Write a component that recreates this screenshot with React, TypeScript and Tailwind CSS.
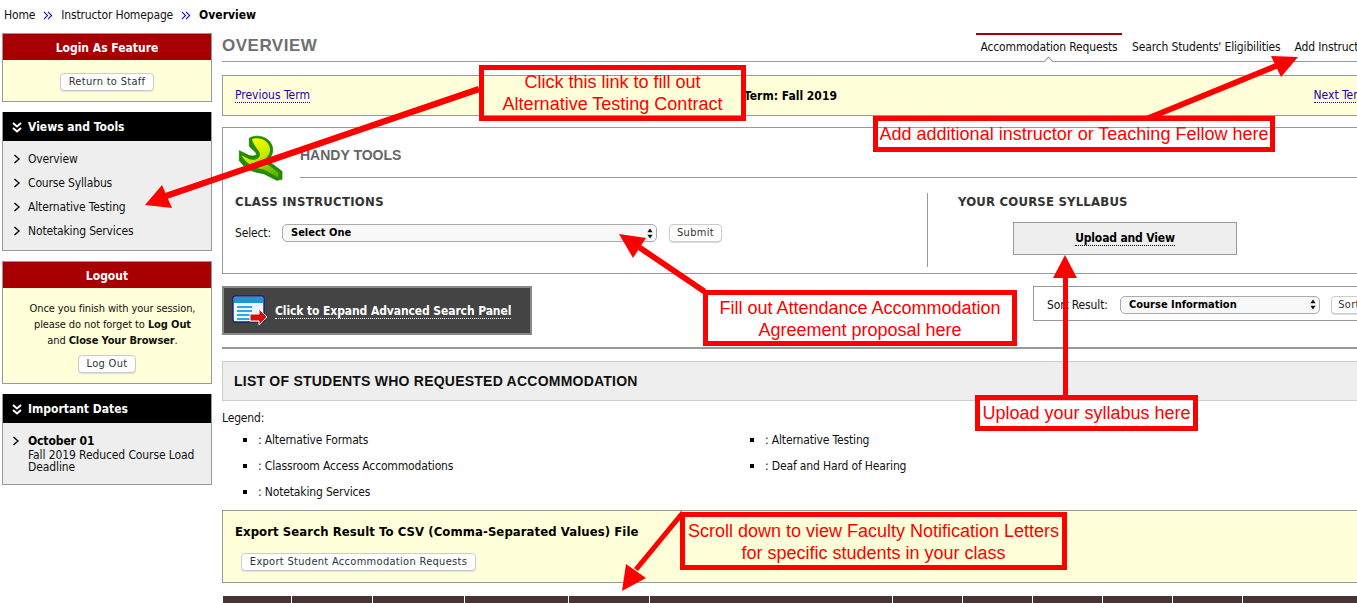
import React from "react";

const Chevron = () => (
  <svg width="8" height="10" viewBox="0 0 8 10" className="shrink-0">
    <path d="M1.5 1 L6 5 L1.5 9" fill="none" stroke="#000" strokeWidth="1.4" />
  </svg>
);

const DoubleDown = () => (
  <svg width="10" height="11" viewBox="0 0 10 11" className="shrink-0">
    <path d="M1 1 L5 4.5 L9 1 M1 6 L5 9.5 L9 6" fill="none" stroke="#fff" strokeWidth="2" />
  </svg>
);

const DoubleRight = () => (
  <svg width="10" height="9" viewBox="0 0 11 9">
    <path d="M1 .5 L5 4.5 L1 8.5 M5.5 .5 L9.5 4.5 L5.5 8.5" fill="none" stroke="#2a00d8" strokeWidth="1.2" />
  </svg>
);

const Btn = ({ children, className = "" }: { children: React.ReactNode; className?: string }) => (
  <span className={`inline-flex items-center justify-center shrink-0 h-[18px] rounded-[4px] border border-[#ccc] bg-white text-[11px] tracking-[0.3px] text-[#333] shadow-[0_1px_1px_#ddd] ${className}`}>
    {children}
  </span>
);

const Sel = ({ label, className }: { label: string; className: string }) => (
  <span className={`flex items-center justify-between shrink-0 h-[18px] rounded-[5px] border border-[#aaa] bg-[#f8f8f8] pl-2 pr-[3px] text-[11px] tracking-normal font-bold text-black ${className}`}>
    {label}
    <svg width="6" height="11" viewBox="0 0 6 11">
      <path d="M3 .5 L5.6 4.2 H.4Z M3 10.5 L5.6 6.8 H.4Z" fill="#111" />
    </svg>
  </span>
);

const Wrench = () => (
  <svg width="56" height="54" viewBox="0 0 168 162" className="shrink-0">
    <defs>
      <linearGradient id="wg" x1="0.25" y1="0" x2="0.75" y2="1">
        <stop offset="0" stopColor="#ffff00" />
        <stop offset="0.5" stopColor="#c4e800" />
        <stop offset="1" stopColor="#5cb000" />
      </linearGradient>
    </defs>
    <path
      d="M52 25 C65 16 90 15 108 30 C124 44 128 66 112 86 L118 100 L150 124 L150 148 L134 151 L95 131 C78 128 56 125 38 110 L22 92 L22 62 L50 76 C60 79 72 78 74 72 C70 62 58 58 52 48Z"
      fill="#238c00"
      stroke="#0f7a00"
      strokeWidth="2"
    />
    <path
      d="M60 27 C74 22 94 24 106 38 C116 50 118 66 106 80 C100 88 96 92 104 102 L140 128 L138 142 C126 136 106 124 92 118 C74 116 50 110 28 76 L52 88 C64 92 82 88 84 74 C84 60 66 52 60 27Z"
      fill="url(#wg)"
    />
  </svg>
);

const SearchIcon = () => (
  <svg width="36" height="32" viewBox="0 0 36 32" className="shrink-0">
    <rect x="1" y="1" width="31" height="26" rx="2" fill="#eef4ff" stroke="#14246b" strokeWidth="1.4" />
    <rect x="2" y="2" width="29" height="6" fill="#1f95d8" />
    <path d="M5 12 H20 M5 16 H20 M5 20 H20 M5 24 H20" stroke="#2aa9e6" strokeWidth="2" />
    <path d="M18 19 H27 V14 L35 22 L27 30 V26 H18Z" fill="#d80c0c" stroke="#fff" strokeWidth="1" />
  </svg>
);

const NavItem = ({ children }: { children: string }) => (
  <div className="flex items-center h-6 pl-[10px] gap-[7px]">
    <Chevron />
    <span>{children}</span>
  </div>
);

const BlackHead = ({ children }: { children: string }) => (
  <div className="flex items-center gap-[6px] h-[29px] pt-[1px] bg-black pl-[9px] text-[12px] tracking-normal font-bold text-white">
    <DoubleDown />
    {children}
  </div>
);

const RedHead = ({ children }: { children: string }) => (
  <div className="flex items-center justify-center h-[26px] pt-[2px] bg-[#a80000] text-[12px] tracking-normal font-bold text-white">{children}</div>
);

const Bullet = ({ children }: { children: string }) => (
  <div className="flex items-center h-[26px] pl-[21px] gap-[11px]">
    <span className="w-1 h-1 bg-black shrink-0" />
    <span>: {children}</span>
  </div>
);

const Note = ({ className, children }: { className: string; children: React.ReactNode }) => (
  <div className={`absolute flex flex-col items-center justify-center border-[5px] border-[#f00] text-[18px] leading-[22px] tracking-normal text-[#f00] font-['Liberation_Sans',sans-serif] whitespace-nowrap ${className}`}>
    {children}
  </div>
);

const cols = [68, 80, 91, 103, 80, 242, 69, 69, 69, 69, 69, 120];

export default function App() {
  return (
    <div className="relative w-[1357px] h-[603px] overflow-hidden bg-white text-[12px] leading-[14px] tracking-[-0.15px] text-[#111] font-['DejaVu_Sans_Condensed','Noto_Sans',sans-serif]">
      {/* Breadcrumb */}
      <div className="flex items-center h-[30px] pl-1 gap-[8px]">
        <span>Home</span>
        <DoubleRight />
        <span>Instructor Homepage</span>
        <DoubleRight />
        <span className="font-bold tracking-normal text-black">Overview</span>
      </div>

      <div className="flex items-start pl-[2px] pt-[3px] gap-[10px]">
        {/* Sidebar */}
        <aside className="w-[210px] shrink-0 flex flex-col gap-[10px]">
          <section className="border border-[#999] h-[69px] bg-[#ffffd9]">
            <RedHead>Login As Feature</RedHead>
            <div className="flex justify-center pt-[13px]">
              <Btn className="w-[94px]">Return to Staff</Btn>
            </div>
          </section>

          <section className="border border-[#999] border-t-0 h-[139px] bg-[#eee]">
            <BlackHead>Views and Tools</BlackHead>
            <div className="pt-[6px]">
              <NavItem>Overview</NavItem>
              <NavItem>Course Syllabus</NavItem>
              <NavItem>Alternative Testing</NavItem>
              <NavItem>Notetaking Services</NavItem>
            </div>
          </section>

          <section className="border border-[#999] h-[123px] bg-[#ffffd9]">
            <RedHead>Logout</RedHead>
            <div className="flex flex-col items-center pt-[13px] text-[11px] tracking-[-0.1px] leading-[16px] text-center">
              <div className="pl-[11px]">
                <p>Once you finish with your session,</p>
                <p>please do not forget to <b>Log Out</b></p>
                <p>and <b>Close Your Browser</b>.</p>
              </div>
              <Btn className="w-[58px] mt-[6px]">Log Out</Btn>
            </div>
          </section>

          <section className="border border-[#999] border-t-0 h-[91px] bg-[#eee]">
            <BlackHead>Important Dates</BlackHead>
            <div className="flex pl-[9px] pt-[12px] gap-[8px] leading-[12px] tracking-[-0.1px]">
              <div className="pt-[1px]"><Chevron /></div>
              <div>
                <div className="font-bold text-black mb-[2px]">October 01</div>
                Fall 2019 Reduced Course Load
                <br />
                Deadline
              </div>
            </div>
          </section>
        </aside>

        {/* Main */}
        <main className="w-[1160px] shrink-0">
          <div className="relative flex items-end justify-between h-[29px] border-b border-[#999]">
            <h1 className="pb-[5px] text-[17px] leading-[20px] font-bold text-[#707070] tracking-[0.5px] font-['Liberation_Sans',sans-serif]">OVERVIEW</h1>
            <nav className="absolute left-[754px] top-0 flex h-[28px] whitespace-nowrap">
              <span className="relative w-[146px] border-t-2 border-[#a80000] pt-[5px] text-center">
                Accommodation Requests
                <span className="absolute left-[69px] -bottom-[4px] w-[7px] h-[7px] rotate-45 bg-white border-l border-t border-[#999]" />
              </span>
              <span className="pt-[7px] ml-[10px]">Search Students' Eligibilities</span>
              <span className="pt-[7px] ml-[14px]">Add Instructors</span>
            </nav>
          </div>

          <div className="relative flex items-center justify-between h-[41px] mt-[13px] pl-[12px] pr-[14px] border-y border-l border-[#999] bg-[#ffffd9]">
            <a className="text-[#2200aa] tracking-normal border-b border-dotted border-[#2200aa]">Previous Term</a>
            <span className="absolute left-[521px] top-[13px] font-bold tracking-normal text-black">Term: Fall 2019</span>
            <a className="text-[#2200aa] tracking-normal border-b border-dotted border-[#2200aa]">Next Term</a>
          </div>

          <section className="relative mt-[11px] h-[147px] border-y border-l border-[#999]">
            <div className="flex pl-[9px] pt-[2px]">
              <Wrench />
              <div className="flex-1 ml-[12px] mt-[13px] h-[35px] pt-[5px] border-b border-[#999] text-[14px] tracking-normal font-bold text-[#666] font-['Liberation_Sans',sans-serif]">
                HANDY TOOLS
              </div>
            </div>
            <div className="flex mt-[9px]">
              <div className="w-[704px] pl-[12px] pt-[1px] shrink-0">
                <h2 className="text-[13px] leading-[16px] tracking-[0.3px] font-bold text-[#333]">CLASS INSTRUCTIONS</h2>
                <div className="flex items-center mt-[14px]">
                  <span className="w-[47px]">Select:</span>
                  <Sel label="Select One" className="w-[375px]" />
                  <Btn className="w-[53px] ml-[12px]">Submit</Btn>
                </div>
              </div>
              <div className="h-[74px] border-l border-[#999] pl-[30px] pt-[1px]">
                <h2 className="text-[13px] leading-[16px] tracking-[0.2px] font-bold text-[#333]">YOUR COURSE SYLLABUS</h2>
                <div className="flex items-center justify-center w-[224px] h-[33px] mt-[12px] ml-[55px] pt-[1px] border border-[#999] bg-[#eee] font-bold text-black">
                  <span className="border-b border-dotted border-black leading-[13px]">Upload and View</span>
                </div>
              </div>
            </div>
          </section>

          <div className="relative h-[63px] mt-[12px] border-b-2 border-[#999]">
            <div className="flex items-center w-[310px] h-[49px] border-[2px] border-[#888] bg-[#444] pl-[8px] gap-[7px]">
              <SearchIcon />
              <span className="text-[12px] mt-[2px] tracking-[-0.1px] whitespace-nowrap font-bold text-white border-b border-dotted border-white leading-[13px]">Click to Expand Advanced Search Panel</span>
            </div>
            <div className="absolute left-[811px] top-0 flex items-center w-[340px] h-[35px] pt-[2px] border border-[#999] pl-[13px]">
              <span className="w-[73px] shrink-0">Sort Result:</span>
              <Sel label="Course Information" className="w-[200px]" />
              <Btn className="w-[36px] ml-[11px]">Sort</Btn>
            </div>
          </div>

          <div className="flex items-center h-[40px] mt-[12px] pl-[11px] border border-[#ccc] bg-[#eee] text-[14px] tracking-[0.23px] font-bold text-[#111] font-['Liberation_Sans',sans-serif]">
            LIST OF STUDENTS WHO REQUESTED ACCOMMODATION
          </div>

          <div className="mt-[10px] h-[14px]">Legend:</div>
          <div className="grid grid-cols-[507px_1fr] mt-[2px]">
            <Bullet>Alternative Formats</Bullet>
            <Bullet>Alternative Testing</Bullet>
            <Bullet>Classroom Access Accommodations</Bullet>
            <Bullet>Deaf and Hard of Hearing</Bullet>
            <Bullet>Notetaking Services</Bullet>
          </div>

          <section className="h-[73px] mt-[5px] border-y border-l border-[#999] bg-[#ffffd9] pl-[12px] pt-[13px]">
            <h3 className="text-[13px] font-bold tracking-[0.07px] text-black leading-[16px]">Export Search Result To CSV (Comma-Separated Values) File</h3>
            <Btn className="w-[235px] mt-[13px] ml-[6px]">Export Student Accommodation Requests</Btn>
          </section>

          <div className="flex h-[10px] mt-[13px] ml-px gap-px">
            {cols.map((w, i) => (
              <div key={i} className="bg-[#4a3333] shrink-0" style={{ width: w }} />
            ))}
          </div>
        </main>
      </div>

      {/* Annotations */}
      <svg className="absolute left-0 top-0 pointer-events-none" width="1357" height="603" viewBox="0 0 1357 603">
        <g fill="#f00" stroke="none">
          <path d="M478 86 L165 193 L167 199 L480 92Z" />
          <path d="M145 205 L162 185 L172 208Z" />
          <path d="M1146 116 L1278 62 L1281 67 L1149 121Z" />
          <path d="M1298 57 L1271 56 L1281 77Z" />
          <path d="M1063 395 V276 H1068 V395Z" />
          <path d="M1065 255 L1053 278 H1077Z" />
          <path d="M706 289 L641 245 L638 250 L703 294Z" />
          <path d="M619 234 L646 238 L633 258Z" />
          <path d="M681 511 L634 568 L638 571 L685 514Z" />
          <path d="M622 591 L626 564 L646 578Z" />
        </g>
      </svg>

      <Note className="left-[479px] top-[65px] w-[267px] h-[56px]">
        <span>Click this link to fill out</span>
        <span>Alternative Testing Contract</span>
      </Note>
      <Note className="left-[873px] top-[116px] w-[402px] h-[36px]">Add additional instructor or Teaching Fellow here</Note>
      <Note className="left-[703px] top-[290px] w-[314px] h-[56px] pt-[1px]">
        <span>Fill out Attendance Accommodation</span>
        <span>Agreement proposal here</span>
      </Note>
      <Note className="left-[975px] top-[395px] w-[223px] h-[36px]">Upload your syllabus here</Note>
      <Note className="left-[680px] top-[512px] w-[387px] h-[58px] pt-[2px]">
        <span>Scroll down to view Faculty Notification Letters</span>
        <span>for specific students in your class</span>
      </Note>
    </div>
  );
}
